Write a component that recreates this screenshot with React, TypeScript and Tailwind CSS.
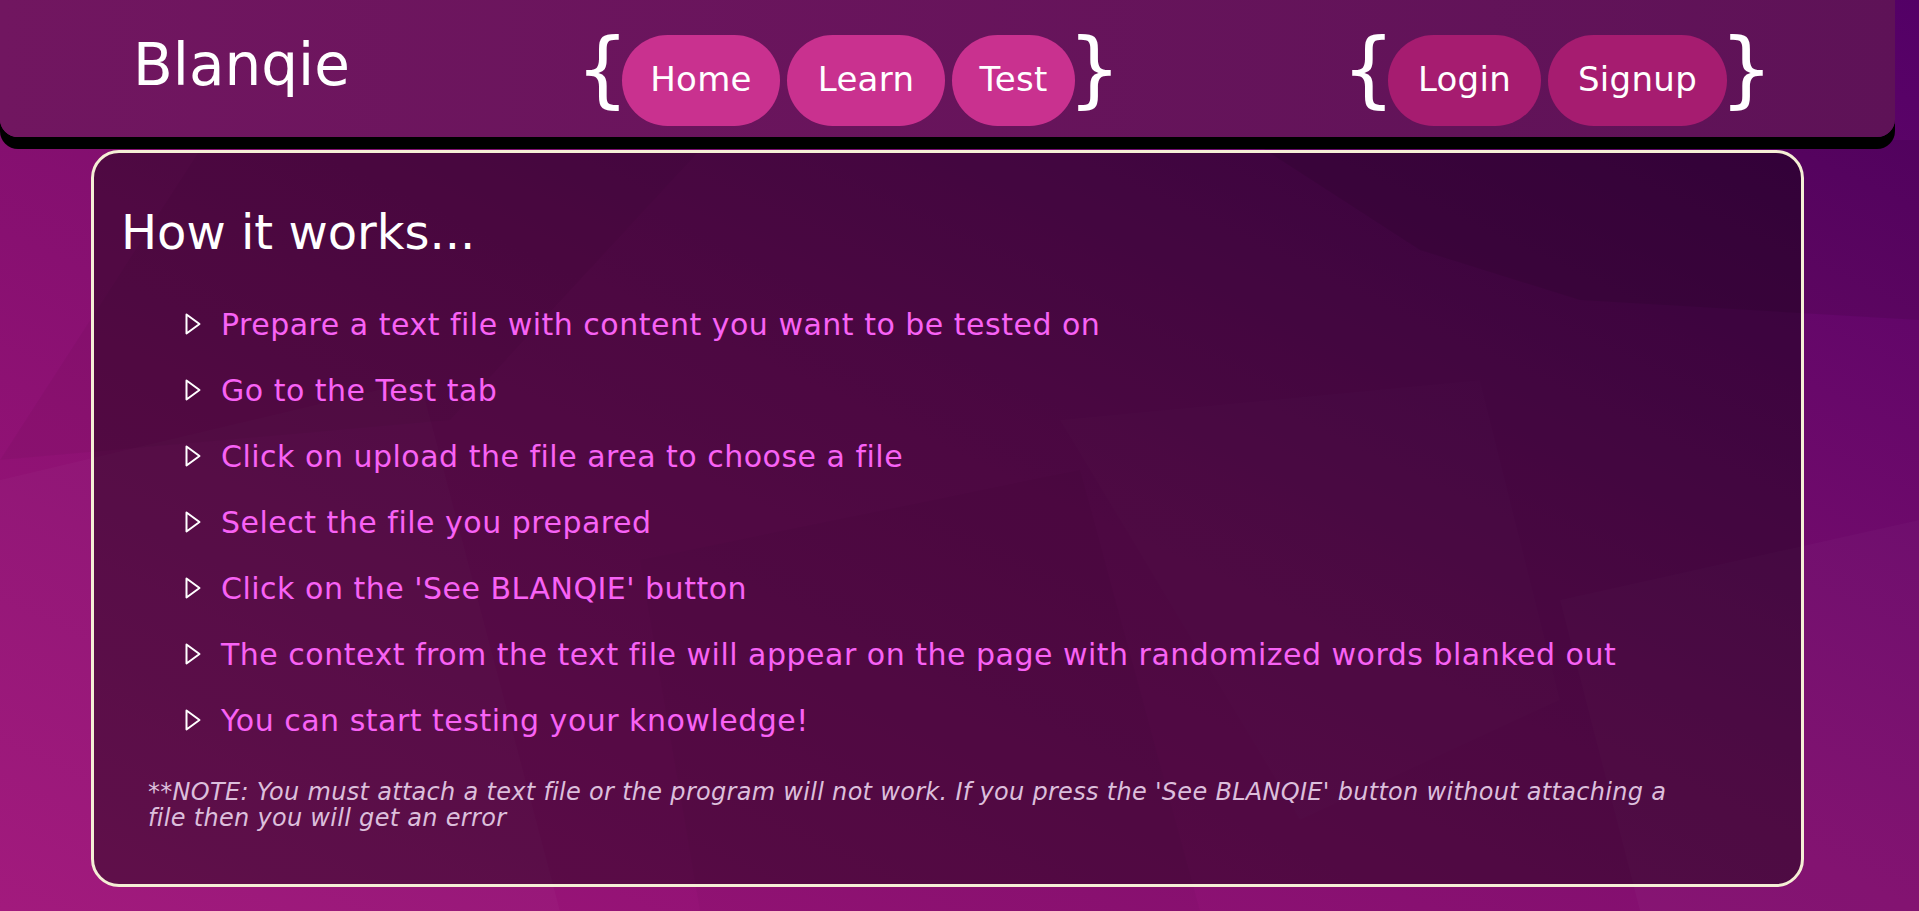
import React from 'react';

const STEPS = [
  'Prepare a text file with content you want to be tested on',
  'Go to the Test tab',
  'Click on upload the file area to choose a file',
  'Select the file you prepared',
  "Click on the 'See BLANQIE' button",
  'The context from the text file will appear on the page with randomized words blanked out',
  'You can start testing your knowledge!',
];

const NAV = [
  { label: 'Home', w: 'w-[158px]' },
  { label: 'Learn', w: 'w-[158px]' },
  { label: 'Test', w: 'w-[123px]' },
];

const AUTH = [
  { label: 'Login', w: 'w-[153px]' },
  { label: 'Signup', w: 'w-[179px]' },
];

const Brace: React.FC<{ ch: string }> = ({ ch }) => (
  <span className="mt-[27px] flex w-[25px] justify-center text-[84px] leading-[84px] text-white">{ch}</span>
);

const Pill: React.FC<{ label: string; w: string; auth?: boolean }> = ({ label, w, auth }) => (
  <button
    className={`mt-[35px] flex h-[91px] items-center justify-center rounded-full pb-[3px] text-[34px] tracking-[0.3px] text-white ${w} ${
      auth ? 'bg-[#a61c70]' : 'bg-[#c9318f]'
    }`}
  >
    {label}
  </button>
);

// faint low-poly shapes behind everything
const Backdrop: React.FC = () => (
  <svg className="absolute inset-0 h-full w-full" viewBox="0 0 1919 911" preserveAspectRatio="none">
    <polygon points="1250,140 1919,140 1919,320 1580,300 1420,250" fill="#000" fillOpacity="0.08" />
    <polygon points="1060,420 1480,380 1560,700 1300,820" fill="#fff" fillOpacity="0.015" />
    <polygon points="0,480 420,380 560,911 0,911" fill="#fff" fillOpacity="0.025" />
    <polygon points="200,150 700,150 450,420 0,460" fill="#000" fillOpacity="0.035" />
    <polygon points="640,560 1080,470 1200,911 700,911" fill="#000" fillOpacity="0.025" />
    <polygon points="1560,600 1919,520 1919,911 1640,911" fill="#fff" fillOpacity="0.025" />
  </svg>
);

export default function App() {
  return (
    <div className="relative min-h-screen w-full overflow-hidden bg-linear-to-tr from-[#a0157a] via-[#800e6e] to-[#530066] font-['DejaVu_Sans',sans-serif]">
      <Backdrop />
      <div className="relative w-[1895px]">
        {/* Top bar */}
        <header className="flex h-[137px] w-[1895px] items-start rounded-b-[18px] bg-linear-to-r from-[#711660] to-[#5e1257] pl-[133px] shadow-[0_12px_0_#000]">
          <div className="mt-[33px] w-[457px] text-[58px] leading-[64px] text-white">Blanqie</div>
          <nav className="flex items-start gap-[7px]">
            <Brace ch="{" />
            {NAV.map(n => (
              <Pill key={n.label} label={n.label} w={n.w} />
            ))}
            <Brace ch="}" />
          </nav>
          <nav className="ml-[249px] flex items-start gap-[7px]">
            <Brace ch="{" />
            {AUTH.map(n => (
              <Pill key={n.label} label={n.label} w={n.w} auth />
            ))}
            <Brace ch="}" />
          </nav>
        </header>

        {/* How it works card */}
        <main className="mx-auto mt-[13px] h-[737px] w-[1713px] rounded-[28px] border-[3px] border-[#f5efd6] bg-black/40 pl-[27px] pt-[52px]">
          <h1 className="text-[48px] leading-[55px] text-white">How it works...</h1>
          <ul className="mt-[31px] pl-[64px]">
            {STEPS.map(s => (
              <li key={s} className="flex h-[66px] items-center gap-[20px]">
                <svg width="16" height="22" viewBox="0 0 16 22" className="shrink-0">
                  <polygon points="1.5,1.5 14.5,11 1.5,20.5" fill="none" stroke="#fff" strokeWidth="2" strokeLinejoin="round" />
                </svg>
                <span className="text-[30px] tracking-[0.5px] text-[#f862f5]">{s}</span>
              </li>
            ))}
          </ul>
          <p className="mt-[26px] pl-[27px] text-[24px] italic leading-[26px] tracking-[0.3px] text-[#dcbfdc]">
            **NOTE: You must attach a text file or the program will not work. If you press the 'See BLANQIE' button without attaching a
            <br />
            file then you will get an error
          </p>
        </main>
      </div>
    </div>
  );
}
